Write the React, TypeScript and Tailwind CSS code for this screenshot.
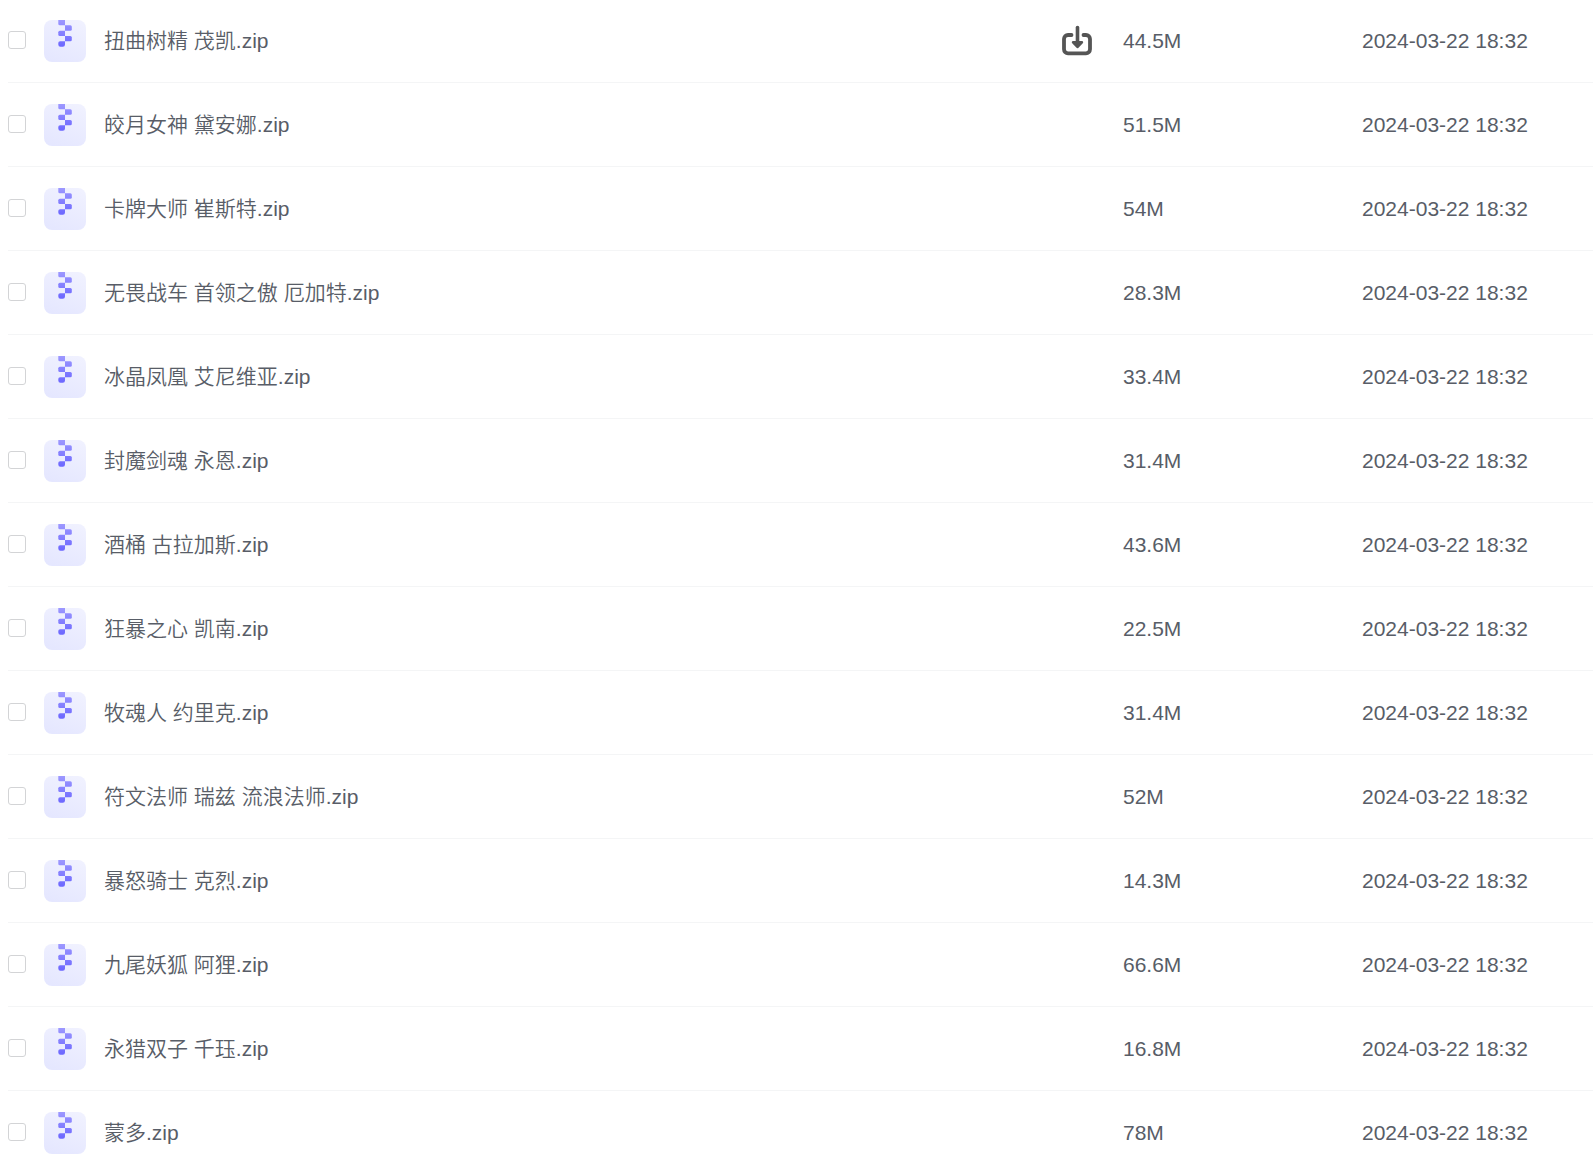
type FileRow = { name: string; size: string; date: string; active?: boolean };

const files: FileRow[] = [
  { name: "扭曲树精 茂凯.zip", size: "44.5M", date: "2024-03-22 18:32", active: true },
  { name: "皎月女神 黛安娜.zip", size: "51.5M", date: "2024-03-22 18:32" },
  { name: "卡牌大师 崔斯特.zip", size: "54M", date: "2024-03-22 18:32" },
  { name: "无畏战车 首领之傲 厄加特.zip", size: "28.3M", date: "2024-03-22 18:32" },
  { name: "冰晶凤凰 艾尼维亚.zip", size: "33.4M", date: "2024-03-22 18:32" },
  { name: "封魔剑魂 永恩.zip", size: "31.4M", date: "2024-03-22 18:32" },
  { name: "酒桶 古拉加斯.zip", size: "43.6M", date: "2024-03-22 18:32" },
  { name: "狂暴之心 凯南.zip", size: "22.5M", date: "2024-03-22 18:32" },
  { name: "牧魂人 约里克.zip", size: "31.4M", date: "2024-03-22 18:32" },
  { name: "符文法师 瑞兹 流浪法师.zip", size: "52M", date: "2024-03-22 18:32" },
  { name: "暴怒骑士 克烈.zip", size: "14.3M", date: "2024-03-22 18:32" },
  { name: "九尾妖狐 阿狸.zip", size: "66.6M", date: "2024-03-22 18:32" },
  { name: "永猎双子 千珏.zip", size: "16.8M", date: "2024-03-22 18:32" },
  { name: "蒙多.zip", size: "78M", date: "2024-03-22 18:32" },
];

function ZipIcon() {
  return (
    <svg className="h-[42px] w-[42px] shrink-0" viewBox="0 0 42 42" aria-hidden="true">
      <defs>
        <linearGradient id="zip-tile" x1="0.7" y1="0" x2="0.3" y2="1">
          <stop offset="0" stopColor="#f0f1ff" />
          <stop offset="1" stopColor="#e5e7ff" />
        </linearGradient>
        <linearGradient id="zip-teeth" gradientUnits="userSpaceOnUse" x1="0" y1="0" x2="0" y2="27">
          <stop offset="0" stopColor="#9d98ff" />
          <stop offset="1" stopColor="#6b66ff" />
        </linearGradient>
      </defs>
      <rect width="42" height="42" rx="8" fill="url(#zip-tile)" />
      <g fill="url(#zip-teeth)">
        <path d="M14.3 0H21v5.3h-5.2a1.500 1.500 0 0 1-1.500-1.500z" />
        <path d="M21 5.300h5.300a1.500 1.500 0 0 1 1.500 1.500v2.400a1.500 1.500 0 0 1-1.500 1.500H21z" />
        <path d="M21 10.700V16h-5.200a1.500 1.500 0 0 1-1.500-1.500v-2.300a1.500 1.500 0 0 1 1.500-1.500z" />
        <path d="M21 16h5.300a1.500 1.500 0 0 1 1.500 1.500v2.300a1.500 1.500 0 0 1-1.500 1.500H21z" />
        <path d="M21 21.300v3.200a2.200 2.200 0 0 1-2.200 2.200h-2.300a2.200 2.200 0 0 1-2.200-2.200v-1.400a1.800 1.800 0 0 1 1.800-1.800z" />
      </g>
    </svg>
  );
}

function DownloadIcon() {
  return (
    <svg className="h-8 w-8" viewBox="0 0 32 32" fill="none" aria-hidden="true">
      <path
        d="M10.500 10H7a4 4 0 0 0-4 4v10.300a4 4 0 0 0 4 4h18a4 4 0 0 0 4-4V14a4 4 0 0 0-4-4h-2.500"
        stroke="#555"
        strokeWidth="3.800"
        strokeLinecap="round"
      />
      <path d="M16.500 2.500v15" stroke="#555" strokeWidth="3.600" strokeLinecap="round" />
      <path d="M12.200 17.300h8.600L16.500 21.700z" fill="#555" stroke="#555" strokeWidth="2.800" strokeLinejoin="round" />
    </svg>
  );
}

export default function App() {
  return (
    <main className="-mt-px overflow-x-hidden bg-white pl-2 font-['Liberation_Sans','Noto_Sans_CJK_SC',sans-serif] text-[21px] leading-[42px] font-[350] text-[#585d67]">
      <table className="w-full table-fixed border-separate border-spacing-0">
        <colgroup>
          <col className="w-9" />
          <col />
          <col className="w-[239px]" />
          <col className="w-[231px]" />
        </colgroup>
        <tbody>
          {files.map((file, i) => (
            <tr
              key={file.name}
              className="*:border-b *:border-[#f4f5f6] *:px-0 *:pt-[21px] *:pb-5 last:*:border-b-0 last:*:pb-2"
            >
              <td>
                <input
                  id={`file-${i}`}
                  type="checkbox"
                  className="mb-0.5 block h-[18px] w-[18px] appearance-none rounded-[3px] border border-[#d3d4d6] bg-white checked:bg-[#6b66ff]"
                />
              </td>
              <td>
                <div className="flex items-center">
                  <ZipIcon />
                  <label htmlFor={`file-${i}`} className="ml-[18px] grow truncate">
                    {file.name}
                  </label>
                  {file.active && (
                    <button type="button" aria-label="下载" className="mr-[30px] shrink-0">
                      <DownloadIcon />
                    </button>
                  )}
                </div>
              </td>
              <td>{file.size}</td>
              <td>{file.date}</td>
            </tr>
          ))}
        </tbody>
      </table>
    </main>
  );
}
